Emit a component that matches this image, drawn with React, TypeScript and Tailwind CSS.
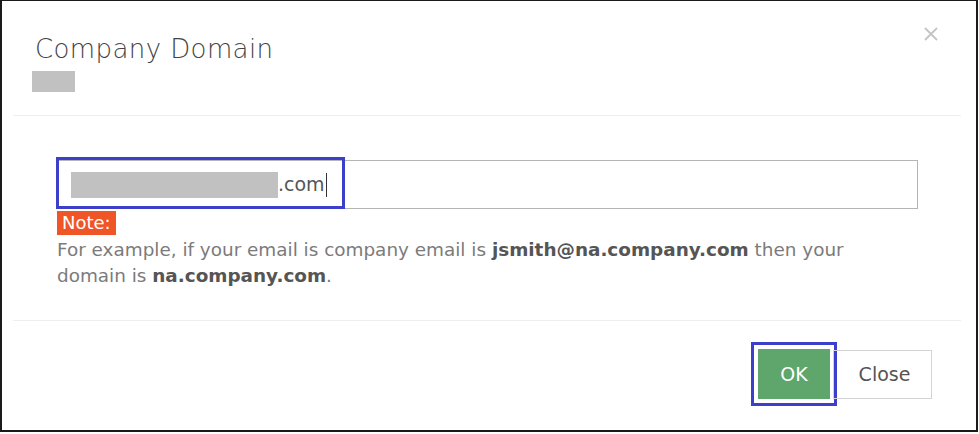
import React from "react";

const font = { fontFamily: '"DejaVu Sans", "Open Sans", sans-serif' };

const CompanyDomainModal = () => {
  return (
    <div className="w-[979px] h-[434px] bg-white pr-[1px] pb-[2px]" style={font}>
      <div className="h-full border-l-2 border-r-2 border-t border-b-2 border-[#1a1a1a] bg-white pl-[11px] pr-[15px]">
        {/* header */}
        <div className="relative h-[115px] border-b border-[#eeeeee] pl-[22px] pt-[33px]">
          <h4 className="text-[26px] font-light leading-[30px] text-[#444] tracking-[0.4px]">
            Company Domain
          </h4>
          <div className="mt-[7px] -ml-[3px] h-[21px] w-[43px] bg-[#c1c1c1]" />
          <button className="absolute right-[22px] top-[25px] text-[#c4c4c4]">
            <svg width="16" height="16" viewBox="0 0 16 16" fill="none">
              <path d="M2 2 L14 14 M14 2 L2 14" stroke="currentColor" strokeWidth="1.8" />
            </svg>
          </button>
        </div>

        {/* body */}
        <div className="h-[205px] border-b border-[#eeeeee] pl-[44px] pr-[43px] pt-[44px]">
          <div className="relative">
            <div className="flex h-[49px] items-center border border-[#b4b4b4] pl-[13px]">
              <div className="h-[26px] w-[207px] bg-[#c1c1c1]" />
              <span className="text-[19px] text-[#555]">.com</span>
              <span className="ml-[1px] h-[24px] w-[1px] bg-[#333]" />
            </div>
            <div className="pointer-events-none absolute -left-[1px] -top-[3px] h-[52px] w-[289px] border-[3px] border-[#3b3fca]" />
          </div>
          <div className="mt-[2px] inline-block bg-[#f05528] px-[5px] text-[18px] leading-[24px] text-white">
            Note:
          </div>
          <p className="mt-[1px] text-[18.4px] leading-[26px] text-[#7b7b7b]">
            For example, if your email is company email is{" "}
            <b className="font-bold text-[#555]">jsmith@na.company.com</b> then your
            <br />
            domain is <b className="font-bold text-[#555]">na.company.com</b>.
          </p>
        </div>

        {/* footer */}
        <div className="flex justify-end pr-[29px] pt-[21px]">
          <div className="flex items-center">
            <div className="border-[3px] border-[#3b3fca] p-[4px]">
              <button className="flex h-[50px] w-[72px] items-center justify-center bg-[#5ea66b] text-[19px] text-white">
                OK
              </button>
            </div>
            <button className="-ml-[4px] flex h-[49px] w-[99px] items-center justify-center border border-[#d4d4d4] pl-[4px] text-[19px] text-[#555]">
              Close
            </button>
          </div>
        </div>
      </div>
    </div>
  );
};

export default function App() {
  return <CompanyDomainModal />;
}
